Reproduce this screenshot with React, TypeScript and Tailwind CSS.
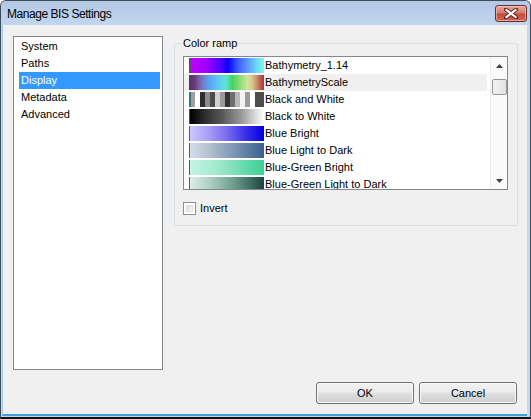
import React from "react";

const font = { fontFamily: '"Liberation Sans", Arial, sans-serif' };

type Ramp = { name: string; bg: string };

const ramps: Ramp[] = [
  {
    name: "Bathymetry_1.14",
    bg: "linear-gradient(to right, #6a3a8c 0px, #6a3a8c 2px, #c000ff 2px, #9a00ff 25%, #5000ff 42%, #0a00f8 52%, #3a5cff 65%, #5c98ff 78%, #6ad8f0 90%, #7cfce8 100%)",
  },
  {
    name: "BathymetryScale",
    bg: "linear-gradient(to right, #5a2c6a 0%, #6a3c7c 8%, #7a64a8 14%, #6c84d0 20%, #5aa8f4 28%, #5cc0f0 36%, #60d8e4 44%, #5ce4cc 50%, #46d25a 58%, #70d870 64%, #a8e088 72%, #d0e498 78%, #d8c890 84%, #c89468 90%, #b86050 95%, #c02840 100%)",
  },
  {
    name: "Black and White",
    bg: "linear-gradient(to right, #3c7a7a 0px, #3c7a7a 2px, #a0a0a0 2px, #a0a0a0 6px, #ffffff 6px, #ffffff 11px, #2e2e2e 11px, #2e2e2e 16px, #8c8c8c 16px, #8c8c8c 21px, #4c4c4c 21px, #4c4c4c 26px, #d0d0d0 26px, #d0d0d0 31px, #9a9a9a 31px, #9a9a9a 36px, #333333 36px, #333333 41px, #6e6e6e 41px, #6e6e6e 46px, #b8b8b8 46px, #b8b8b8 51px, #f4f4f4 51px, #f4f4f4 56px, #9c9c9c 56px, #9c9c9c 61px, #ffffff 61px, #ffffff 66px, #4e4e4e 66px, #4e4e4e 75px)",
  },
  {
    name: "Black to White",
    bg: "linear-gradient(to right, #1a6a6a 0px, #1a6a6a 1px, #000000 1px, #2a2a2a 20%, #5a5a5a 45%, #9a9a9a 70%, #d8d8d8 88%, #ffffff 100%)",
  },
  {
    name: "Blue Bright",
    bg: "linear-gradient(to right, #1a7a7a 0px, #1a7a7a 1px, #cacaff 1px, #a8a0f8 25%, #7a6cf0 50%, #3c30e8 75%, #0000e0 100%)",
  },
  {
    name: "Blue Light to Dark",
    bg: "linear-gradient(to right, #1a7a7a 0px, #1a7a7a 1px, #d4dee8 1px, #aebccc 30%, #7c96b4 60%, #3a6090 100%)",
  },
  {
    name: "Blue-Green Bright",
    bg: "linear-gradient(to right, #1a7a6a 0px, #1a7a6a 1px, #c4f4e4 1px, #9ee8cc 40%, #6cdcb0 70%, #3cd094 100%)",
  },
  {
    name: "Blue-Green Light to Dark",
    bg: "linear-gradient(to right, #1a7a6a 0px, #1a7a6a 1px, #dceee8 1px, #a8ccc0 30%, #6c9c8c 60%, #1c4440 100%)",
  },
];

const nav = ["System", "Paths", "Display", "Metadata", "Advanced"];

function CloseButton() {
  return (
    <div className="mt-[4px] w-[32px] h-[17px] rounded-[3px] border border-[#6b2e2a] bg-[linear-gradient(to_bottom,#e8a89c_0%,#d67a6c_45%,#c44a3a_55%,#d26656_100%)] flex items-center justify-center shadow-[inset_0_0_0_1px_rgba(255,220,210,0.5)]">
      <svg width="14" height="11" viewBox="0 0 14 11">
        <path d="M2 1.5 L12 9.5 M12 1.5 L2 9.5" stroke="#5a2420" strokeWidth="4" strokeLinecap="square" />
        <path d="M2.5 2 L11.5 9 M11.5 2 L2.5 9" stroke="#ffffff" strokeWidth="2.2" strokeLinecap="square" />
      </svg>
    </div>
  );
}

function ScrollBar() {
  return (
    <div className="w-[17px] bg-[#fafafa] border-l border-[#ececec] flex flex-col items-center">
      <div className="h-[17px] w-full flex items-center justify-center">
        <svg width="7" height="4" viewBox="0 0 7 4">
          <path d="M3.5 0 L7 4 L0 4 Z" fill="#404040" />
        </svg>
      </div>
      <div className="mt-[5px] w-[15px] h-[16px] rounded-[2px] border border-[#979797] bg-[linear-gradient(to_right,#f2f2f2,#e2e2e2)]" />
      <div className="flex-1" />
      <div className="h-[17px] w-full flex items-center justify-center">
        <svg width="7" height="4" viewBox="0 0 7 4">
          <path d="M0 0 L7 0 L3.5 4 Z" fill="#404040" />
        </svg>
      </div>
    </div>
  );
}

function Button({ label }: { label: string }) {
  return (
    <div className="w-[98px] h-[22px] rounded-[3px] border border-[#707070] bg-[linear-gradient(to_bottom,#f2f2f2_0%,#ebebeb_45%,#dddddd_55%,#cfcfcf_100%)] shadow-[inset_0_0_0_1px_#fcfcfc] flex items-center justify-center text-[11px] text-black">
      {label}
    </div>
  );
}

export default function App() {
  return (
    <div
      className="w-[531px] h-[419px] bg-[#c4d7ee] border border-[#3d4b5c] border-b-2 border-b-[#111] rounded-t-[6px] flex flex-col overflow-hidden"
      style={font}
    >
      <div className="h-[24px] flex justify-between items-start pl-[6px] pr-[3px] bg-[linear-gradient(to_bottom,#b2c8e4,#c2d6ee)]">
        <div className="text-[12px] leading-[24px] pt-[1px] tracking-[-0.45px] text-black">Manage BIS Settings</div>
        <CloseButton />
      </div>
      <div className="flex-1 ml-[1px] mr-[3px] mb-[1px] border-l border-[#a6cdee] border-b-2 border-b-[#3fa2dc] bg-[#f0f0f0] flex flex-col pt-[11px] pl-[10px] pr-[9px] text-[11px] text-black">
        <div className="flex gap-[11px]">
          <div className="w-[150px] h-[334px] bg-white border border-[#828790] pt-[1px] px-[5px] pr-[2px]">
            {nav.map((n) => (
              <div
                key={n}
                className={
                  n === "Display"
                    ? "h-[17px] leading-[17px] pl-[2px] bg-[#3399ff] text-white"
                    : "h-[17px] leading-[17px] pl-[2px]"
                }
              >
                {n}
              </div>
            ))}
          </div>
          <div className="relative mt-[7px] w-[344px] h-[183px] border border-[#d5dfe5] rounded-[3px] pl-[8px] pt-[12px]">
            <div className="absolute top-[-7px] left-[6px] px-[2px] bg-[#f0f0f0] leading-[13px]">Color ramp</div>
            <div className="w-[325px] h-[134px] bg-white border border-[#828790] flex">
              <div className="flex-1 overflow-hidden pr-[3px]">
                {ramps.map((r, i) => (
                  <div
                    key={r.name}
                    className={
                      i === 1
                        ? "h-[17px] flex items-center bg-[#f0f0f0] whitespace-nowrap"
                        : "h-[17px] flex items-center whitespace-nowrap"
                    }
                  >
                    <div className="ml-[5px] w-[75px] h-[15px] shrink-0" style={{ background: r.bg }} />
                    <span className="ml-[1px] leading-[17px]">{r.name}</span>
                  </div>
                ))}
              </div>
              <ScrollBar />
            </div>
            <div className="flex items-center mt-[12px]">
              <div className="w-[13px] h-[13px] border border-[#8f8f8f] bg-white p-[2px]">
                <div className="w-full h-full bg-[linear-gradient(135deg,#dcdcdc,#f8f8f8)] border border-[#e0e0e0]" />
              </div>
              <span className="ml-[4px] leading-[13px]">Invert</span>
            </div>
          </div>
        </div>
        <div className="flex justify-end gap-[5px] mt-[12px] pr-[1px]">
          <Button label="OK" />
          <Button label="Cancel" />
        </div>
      </div>
    </div>
  );
}
